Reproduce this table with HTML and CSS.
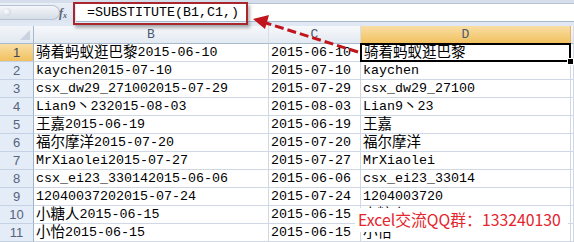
FILE: index.html
```html
<!DOCTYPE html>
<html>
<head>
<meta charset="utf-8">
<link rel="stylesheet" href="styles.css">
</head>
<body>
<div class="page">
  <div class="fbar">
    <div class="namearea">
      <div class="namebox"><span class="dot"></span></div>
      <span class="fx">f<sub>x</sub></span>
    </div>
    <div class="formula">=SUBSTITUTE(B1,C1,)</div>
  </div>
  <div class="sheet">
    <div class="corner"></div><div class="ch">B</div><div class="ch">C</div><div class="ch sel">D</div><div class="ch last"></div>

    <div class="rh sel">1</div><div class="c"><span class="cj">骑着蚂蚁逛巴黎</span>2015-06-10</div><div class="c">2015-06-10</div><div class="c active"><span class="cj">骑着蚂蚁逛巴黎</span></div><div class="c last"></div>
    <div class="rh">2</div><div class="c">kaychen2015-07-10</div><div class="c">2015-07-10</div><div class="c">kaychen</div><div class="c last"></div>
    <div class="rh">3</div><div class="c">csx_dw29_271002015-07-29</div><div class="c">2015-07-29</div><div class="c">csx_dw29_27100</div><div class="c last"></div>
    <div class="rh">4</div><div class="c">Lian9<span class="cj">丶</span>232015-08-03</div><div class="c">2015-08-03</div><div class="c">Lian9<span class="cj">丶</span>23</div><div class="c last"></div>
    <div class="rh">5</div><div class="c"><span class="cj">王嘉</span>2015-06-19</div><div class="c">2015-06-19</div><div class="c"><span class="cj">王嘉</span></div><div class="c last"></div>
    <div class="rh">6</div><div class="c"><span class="cj">福尔摩洋</span>2015-07-20</div><div class="c">2015-07-20</div><div class="c"><span class="cj">福尔摩洋</span></div><div class="c last"></div>
    <div class="rh">7</div><div class="c">MrXiaolei2015-07-27</div><div class="c">2015-07-27</div><div class="c">MrXiaolei</div><div class="c last"></div>
    <div class="rh">8</div><div class="c">csx_ei23_330142015-06-06</div><div class="c">2015-06-06</div><div class="c">csx_ei23_33014</div><div class="c last"></div>
    <div class="rh">9</div><div class="c">12040037202015-07-24</div><div class="c">2015-07-24</div><div class="c">1204003720</div><div class="c last"></div>
    <div class="rh">10</div><div class="c"><span class="cj">小糖人</span>2015-06-15</div><div class="c">2015-06-15</div><div class="c"><span class="cj">小糖人</span></div><div class="c last"></div>
    <div class="rh">11</div><div class="c"><span class="cj">小怡</span>2015-06-15</div><div class="c">2015-06-15</div><div class="c"><span class="cj">小怡</span></div><div class="c last"></div>
  </div>

  <div class="redbox"></div>
  <svg class="arrow" width="574" height="242" viewBox="0 0 574 242">
    <line x1="358" y1="52" x2="266" y2="23" stroke="#c0151c" stroke-width="3" stroke-dasharray="9 4"/>
    <polygon points="253,19 269,15 265,29" fill="#c0151c"/>
  </svg>
  <div class="note">Excel交流QQ群：133240130</div>
</div>
</body>
</html>
```
FILE: styles.css
```css
html, body {
  margin: 0;
  padding: 0;
  background: #ffffff;
}
.page {
  position: relative;
  width: 574px;
  height: 242px;
  overflow: hidden;
  background: #dfe8f3;
}
.fbar {
  display: flex;
  height: 26px;
  box-sizing: border-box;
  border-top: 3px solid #d5deea;
  padding-bottom: 4px;
  background: #dfe8f3;
}
.namearea {
  width: 76px;
  display: flex;
  align-items: center;
  position: relative;
  background: linear-gradient(#e9eff7, #dbe4f0);
}
.namebox {
  width: 60px;
  height: 15px;
  border-radius: 0 8px 8px 0;
  background: linear-gradient(#f4f6f9, #d6dde7);
  border: 1px solid #b7c3d3;
  border-left: none;
  box-sizing: border-box;
  position: relative;
}
.dot {
  position: absolute;
  left: 3px;
  top: 2px;
  width: 8px;
  height: 8px;
  border-radius: 50%;
  background: radial-gradient(circle at 40% 40%, #ffffff, #c3ccd8);
}
.fx {
  position: absolute;
  left: 59px;
  top: 3px;
  font-family: "Liberation Serif", serif;
  font-style: italic;
  font-weight: bold;
  font-size: 12px;
  color: #5a6272;
}
.fx sub {
  font-size: 8px;
  vertical-align: -1px;
}
.formula {
  flex: 1;
  background: #ffffff;
  border-top: 1px solid #b6c4d6;
  border-bottom: 1px solid #a9b9ce;
  font-family: "Liberation Mono", monospace;
  font-size: 13.33px;
  line-height: 17px;
  padding-left: 11px;
  color: #000;
}
.sheet {
  display: grid;
  grid-template-columns: 34px 235px 92px 210px 1fr;
  grid-auto-rows: 18px;
  background: #ffffff;
}
.corner {
  background: linear-gradient(#f2f5f9, #e3e9f1);
  border-right: 1px solid #a7b9cd;
  border-bottom: 1px solid #a7b9cd;
  position: relative;
}
.corner::after {
  content: "";
  position: absolute;
  right: 3px;
  bottom: 3px;
  width: 0;
  height: 0;
  border-left: 10px solid transparent;
  border-bottom: 10px solid #c9d3df;
}
.ch {
  background: linear-gradient(#f6f8fb, #e4eaf2);
  border-right: 1px solid #d6dde7;
  border-bottom: 1px solid #a7b9cd;
  text-align: center;
  font-family: "Liberation Mono", monospace;
  font-size: 13px;
  line-height: 18px;
  color: #4a5870;
}
.ch.sel {
  background: linear-gradient(#f9dea4, #f1c15f);
  border-bottom: 1px solid #e29a3b;
  border-right: 1px solid #e6b569;
}
.rh {
  background: #e4ecf7;
  border-right: 1px solid #9fb4cc;
  border-bottom: 1px solid #c5d2e3;
  text-align: center;
  font-family: "Liberation Sans", sans-serif;
  font-size: 13px;
  line-height: 18px;
  color: #56647c;
}
.rh.sel {
  background: linear-gradient(#f9dea4, #f1c15f);
  color: #3d4658;
}
.c {
  border-right: 1px solid #d0d7e5;
  border-bottom: 1px solid #d0d7e5;
  font-family: "Liberation Mono", monospace;
  font-size: 13.33px;
  line-height: 17px;
  height: 18px;
  box-sizing: border-box;
  padding-left: 2px;
  white-space: nowrap;
  color: #000;
}
.cj {
  font-family: "Noto Sans CJK SC", sans-serif;
  font-size: 14.5px;
  line-height: 14px;
  display: inline-block;
  vertical-align: -1px;
}
.c.active {
  position: relative;
  padding-left: 3px;
}
.c.active::after {
  content: "";
  position: absolute;
  left: -1px;
  top: -1px;
  right: -1px;
  bottom: -1px;
  border: 2px solid #000;
}
.c.active::before {
  content: "";
  position: absolute;
  right: -4px;
  bottom: -4px;
  width: 5px;
  height: 5px;
  background: #000;
  border: 1px solid #fff;
  z-index: 2;
}
.redbox {
  position: absolute;
  left: 73px;
  top: 2px;
  width: 175px;
  height: 23px;
  box-sizing: border-box;
  border: 2px solid #a8262c;
  box-shadow: 2px 3px 3px rgba(90, 90, 90, 0.45);
}
.arrow {
  position: absolute;
  left: 0;
  top: 0;
}
.note {
  position: absolute;
  left: 355px;
  top: 208px;
  width: 213px;
  height: 24px;
  background: #ffffff;
  color: #e5242b;
  font-family: "Noto Sans CJK SC", sans-serif;
  font-size: 15.8px;
  line-height: 24px;
  padding-left: 3px;
  box-sizing: border-box;
  white-space: nowrap;
}
```
